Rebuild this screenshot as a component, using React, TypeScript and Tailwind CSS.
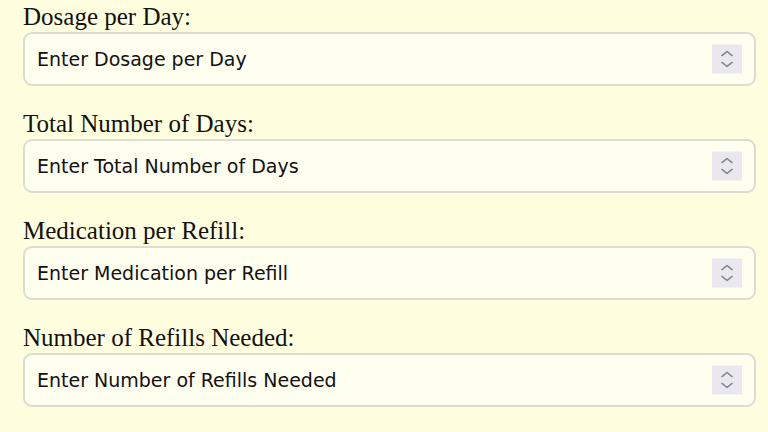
import React from "react";

const fields = [
  "Dosage per Day",
  "Total Number of Days",
  "Medication per Refill",
  "Number of Refills Needed",
];

function Spinner() {
  return (
    <div className="absolute right-[14px] top-1/2 -translate-y-1/2 w-[30px] h-[29px] bg-[#e8e8ee] flex flex-col items-center justify-center gap-[5px] pointer-events-none">
      <svg width="12" height="6" viewBox="0 0 12 6" fill="none">
        <path d="M1 5.2L6 1L11 5.2" stroke="#85858f" strokeWidth="1.6" strokeLinecap="round" strokeLinejoin="round" />
      </svg>
      <svg width="12" height="6" viewBox="0 0 12 6" fill="none">
        <path d="M1 0.8L6 5L11 0.8" stroke="#85858f" strokeWidth="1.6" strokeLinecap="round" strokeLinejoin="round" />
      </svg>
    </div>
  );
}

export default function App() {
  return (
    <div className="min-h-screen bg-[#ffffe0] pl-[23px] pr-[12px] pt-[4px]">
      <div className="flex flex-col gap-[25px]">
        {fields.map((f) => (
          <div key={f} className="flex flex-col">
            <label className="mb-[2px] text-[25px] leading-[26px] text-[#111] font-['Liberation_Serif',serif]">
              {f}:
            </label>
            <div className="relative">
              <input
                type="number"
                placeholder={`Enter ${f}`}
                className="w-full h-[54px] rounded-[9px] border-2 border-[#dcdcd2] bg-[#fffff0] pl-[12px] pr-[50px] text-[19px] text-[#111] placeholder:text-[#111] font-['DejaVu_Sans',sans-serif] outline-none [appearance:textfield] [&::-webkit-inner-spin-button]:appearance-none [&::-webkit-outer-spin-button]:appearance-none"
              />
              <Spinner />
            </div>
          </div>
        ))}
      </div>
    </div>
  );
}
